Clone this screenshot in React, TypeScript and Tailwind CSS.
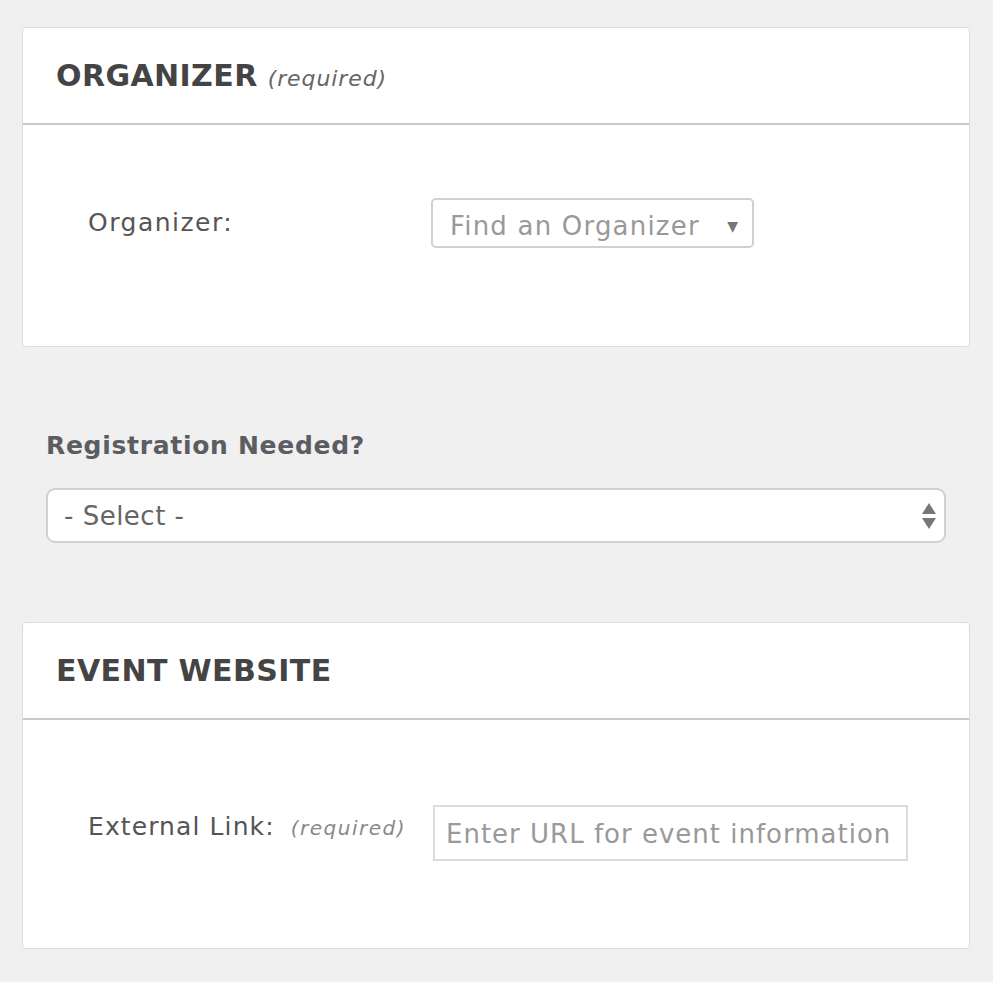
import React from 'react';

const font = { fontFamily: '"DejaVu Sans", "Noto Sans", sans-serif' };

function Card({ title, note, children }: { title: string; note?: string; children: React.ReactNode }) {
  return (
    <div className="bg-white border border-[#dcdcdc] rounded-[4px]">
      <div className="h-[97px] flex items-center pl-[33px] border-b-2 border-[#c8c8c8]">
        <h2 className="text-[30px] font-bold text-[#444] tracking-[0.4px] leading-none">
          {title}
          {note && <span className="ml-[10px] text-[22px] font-normal italic text-[#666] tracking-[0.9px]">{note}</span>}
        </h2>
      </div>
      {children}
    </div>
  );
}

export default function App() {
  return (
    <div className="min-h-[982px] bg-[#f0f0f0] pt-[27px] pl-[22px] pr-[23px]" style={font}>
      <Card title="ORGANIZER" note="(required)">
        <div className="h-[221px] flex items-start pt-[73px] pl-[65px]">
          <label className="w-[343px] pt-[6px] text-[25px] tracking-[1.5px] text-[#555]">Organizer:</label>
          <button className="w-[323px] h-[50px] flex items-center justify-between pl-[17px] pr-[14px] pt-[5px] border-2 border-[#d0d0d0] rounded-[5px] bg-white">
            <span className="text-[26px] tracking-[1.2px] text-[#999] leading-none">Find an Organizer</span>
            <span className="text-[14px] text-[#777] leading-none">▼</span>
          </button>
        </div>
      </Card>

      <div className="pt-[86px] pl-[24px] pr-[24px]">
        <h3 className="text-[25px] font-bold tracking-[0.7px] text-[#5b5d62] leading-none">Registration Needed?</h3>
        <div className="mt-[30px] h-[55px] flex items-center justify-between pl-[16px] pr-[8px] border-2 border-[#d0d0d0] rounded-[9px] bg-white">
          <span className="text-[26px] tracking-[0.5px] text-[#666] leading-none">- Select -</span>
          <svg width="14" height="26" viewBox="0 0 14 26">
            <path d="M7 0 L14 11 H0 Z" fill="#777" />
            <path d="M0 15 H14 L7 26 Z" fill="#777" />
          </svg>
        </div>
      </div>

      <div className="mt-[79px]">
        <Card title="EVENT WEBSITE">
          <div className="h-[228px] flex items-start pt-[85px] pl-[65px]">
            <label className="w-[345px] pt-[3px] flex items-baseline">
              <span className="text-[25px] tracking-[1.1px] text-[#555]">External Link:</span>
              <span className="ml-[16px] text-[20px] italic font-light tracking-[1.5px] text-[#888]">(required)</span>
            </label>
            <input
              className="w-[475px] h-[56px] px-[11px] pt-[2px] border-2 border-[#dcdcdc] bg-white text-[26px] tracking-[1px] text-[#999] placeholder:text-[#999] outline-none"
              placeholder="Enter URL for event information"
              style={font}
            />
          </div>
        </Card>
      </div>
    </div>
  );
}
